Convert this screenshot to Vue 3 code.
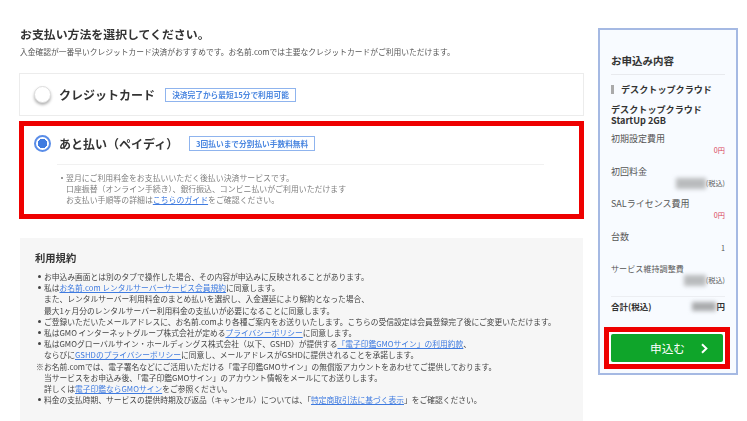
<script setup>
const sideRows = [
  { label: '初期設定費用', value: '0円', kind: 'red' },
  { label: '初回料金', blur: 30, value: '(税込)' },
  { label: 'SALライセンス費用', value: '0円', kind: 'red' },
  { label: '台数', value: '1' },
  { label: 'サービス維持調整費', blur: 22, value: '(税込)', small: true }
]
</script>

<template>
  <div class="page">
    <main class="main">
      <h1 class="title">お支払い方法を選択してください。</h1>
      <p class="lead">入金確認が一番早いクレジットカード決済がおすすめです。お名前.comでは主要なクレジットカードがご利用いただけます。</p>

      <section class="card plain">
        <span class="radio"></span>
        <span class="method">クレジットカード</span>
        <span class="tag">決済完了から最短15分で利用可能</span>
      </section>

      <section class="card marked">
        <div class="head">
          <span class="radio on"></span>
          <span class="method">あと払い（ペイディ）</span>
          <span class="tag wide">3回払いまで分割払い手数料無料</span>
        </div>
        <div class="detail">
          <p class="dot">翌月にご利用料金をお支払いいただく後払い決済サービスです。</p>
          <p>口座振替（オンライン手続き）、銀行振込、コンビニ払いがご利用いただけます</p>
          <p>お支払い手順等の詳細は<a>こちらのガイド</a>をご確認ください。</p>
        </div>
      </section>

      <section class="terms">
        <h2>利用規約</h2>
        <ul>
          <li>お申込み画面とは別のタブで操作した場合、その内容が申込みに反映されることがあります。</li>
          <li>私は<a>お名前.com レンタルサーバーサービス会員規約</a>に同意します。<br>また、レンタルサーバー利用料金のまとめ払いを選択し、入金遅延により解約となった場合、<br>最大1ヶ月分のレンタルサーバー利用料金の支払いが必要になることに同意します。</li>
          <li>ご登録いただいたメールアドレスに、お名前.comより各種ご案内をお送りいたします。こちらの受信設定は会員登録完了後にご変更いただけます。</li>
          <li>私はGMO インターネットグループ株式会社が定める<a>プライバシーポリシー</a>に同意します。</li>
          <li>私はGMOグローバルサイン・ホールディングス株式会社（以下、GSHD）が提供する<a>「電子印鑑GMOサイン」の利用約款</a>、<br>ならびに<a>GSHDのプライバシーポリシー</a>に同意し、メールアドレスがGSHDに提供されることを承諾します。</li>
          <li class="note">お名前.comでは、電子署名などにご活用いただける「電子印鑑GMOサイン」の無償版アカウントをあわせてご提供しております。<br>当サービスをお申込み後、「電子印鑑GMOサイン」のアカウント情報をメールにてお送りします。<br>詳しくは<a>電子印鑑ならGMOサイン</a>をご参照ください。</li>
          <li>料金の支払時期、サービスの提供時期及び返品（キャンセル）については、「<a>特定商取引法に基づく表示</a>」をご確認ください。</li>
        </ul>
      </section>
    </main>

    <aside class="side">
      <h3>お申込み内容</h3>
      <div class="category">デスクトップクラウド</div>
      <div class="plan">デスクトップクラウド<br>StartUp 2GB</div>
      <div v-for="row in sideRows" :key="row.label" class="row">
        <div class="label" :class="{ small: row.small }">{{ row.label }}</div>
        <div class="value" :class="row.kind">
          <span v-if="row.blur" class="smudge" :style="{ width: row.blur + 'px' }"></span>{{ row.value }}
        </div>
      </div>
      <div class="total">
        <span>合計(税込)</span>
        <span class="sum"><span class="smudge dark"></span>円</span>
      </div>
      <div class="cta">
        <button type="button">
          <span>申込む</span>
          <svg width="9" height="11" viewBox="0 0 9 11"><path d="M2 1.2 6.4 5.5 2 9.8" fill="none" stroke="#fff" stroke-width="2"/></svg>
        </button>
      </div>
    </aside>
  </div>
</template>

<style>
html, body { margin: 0; background: #fff; }
</style>

<style scoped>
.page {
  width: 747px;
  height: 421px;
  overflow: hidden;
  box-sizing: border-box;
  padding: 28px 10px 0 19px;
  display: flex;
  align-items: flex-start;
  gap: 14px;
  font-family: "Noto Sans CJK JP", "Noto Sans", sans-serif;
  color: #333;
  filter: blur(0.45px);
}
.main { width: 565px; flex: none; }
.title { margin: 0 0 0 1px; font-size: 11.9px; line-height: 12px; font-weight: 700; color: #333; }
.lead { margin: 6px 0 0 1px; font-size: 7.75px; line-height: 11px; color: #555; white-space: nowrap; }
.card { box-sizing: border-box; background: #fff; }
.plain {
  margin-top: 16px;
  height: 43px;
  border: 1px solid #ececec;
  display: flex;
  align-items: center;
  padding-left: 14px;
}
.marked {
  margin-top: 5px;
  height: 98px;
  border: 5px solid #ee0000;
  padding: 9px 0 0 10px;
}
.head { display: flex; align-items: center; }
.radio {
  width: 17px;
  height: 17px;
  box-sizing: border-box;
  border: 1px solid #ddd;
  border-radius: 50%;
  background: #fff;
  box-shadow: 0 2px 3px rgba(0, 0, 0, 0.3);
  flex: none;
  margin-right: 8px;
}
.radio.on {
  border: 2px solid #5a8de8;
  background: radial-gradient(circle, #3f7be0 0 4.5px, #fff 5px);
  box-shadow: none;
}
.method { font-size: 12px; line-height: 15px; font-weight: 700; color: #333; white-space: nowrap; }
.tag {
  margin-left: 10px;
  box-sizing: border-box;
  height: 14px;
  width: 131px;
  border: 1px solid #8fb4ee;
  color: #4a86e0;
  font-size: 7.7px;
  line-height: 12px;
  font-weight: 700;
  text-align: center;
  white-space: nowrap;
}
.tag.wide { width: 126px; height: 15px; line-height: 13px; margin-left: 11px; }
.detail {
  margin: 12px 35px 0 23px;
  border-top: 1px solid #f1f1f1;
  padding: 7px 0 0 9px;
  font-size: 7.9px;
  line-height: 11px;
  color: #808080;
}
.detail p { margin: 0; white-space: nowrap; }
.dot { position: relative; }
.dot::before {
  content: "";
  position: absolute;
  left: -5px;
  top: 5px;
  width: 2px;
  height: 2px;
  border-radius: 50%;
  background: #777;
}
a { color: #3f7be0; text-decoration: underline; }
.terms {
  margin: 19px 1px 0 1px;
  height: 183px;
  box-sizing: border-box;
  background: #f6f6f6;
  padding: 13px 0 0 15px;
}
.terms h2 { margin: 0; font-size: 10.3px; line-height: 14px; font-weight: 700; color: #333; }
.terms ul { list-style: none; margin: 6px 0 0; padding: 0 0 0 9px; font-size: 7.75px; line-height: 11.2px; color: #444; white-space: nowrap; }
.terms li { position: relative; }
.terms li::before {
  content: "";
  position: absolute;
  left: -6px;
  top: 4px;
  width: 3px;
  height: 3px;
  border-radius: 50%;
  background: #444;
}
.terms li.note::before { content: "※"; background: none; left: -8px; top: 0; width: auto; height: auto; }
.side {
  width: 140px;
  flex: none;
  height: 347px;
  box-sizing: border-box;
  border: 2px solid #a5b9e3;
  background: #f8fbff;
  padding: 24px 11px 0 11px;
  position: relative;
}
.side h3 { margin: 0; padding-bottom: 7px; font-size: 10.5px; line-height: 13px; font-weight: 700; border-bottom: 1px solid #e8eaee; color: #333; }
.category {
  margin-top: 8px;
  padding-left: 10px;
  font-size: 9.1px;
  line-height: 12px;
  font-weight: 700;
  position: relative;
  white-space: nowrap;
}
.category::before { content: ""; position: absolute; left: 0; top: 2px; width: 3px; height: 9px; background: #aaa; }
.plan { margin: 9px 0 -2.5px; font-size: 9.1px; line-height: 11px; font-weight: 700; white-space: nowrap; }
.row { margin-top: 8.5px; }
.label { font-size: 9px; line-height: 13px; color: #555; white-space: nowrap; }
.label.small { font-size: 8.1px; }
.value { height: 11px; font-size: 7.2px; line-height: 11px; color: #555; text-align: right; display: flex; justify-content: flex-end; align-items: center; }
.value.red { color: #d9455a; }
.smudge { display: inline-block; height: 11px; background: #b9bbbd; filter: blur(2px); }
.smudge.dark { width: 24px; height: 9px; background: #a9abad; }
.total {
  margin: 10px 0 0;
  border-top: 1px solid #eceef2;
  padding-top: 2px;
  display: flex;
  justify-content: space-between;
  align-items: center;
  font-size: 8.5px;
  line-height: 14px;
  font-weight: 700;
}
.sum { display: flex; align-items: center; }
.cta {
  position: absolute;
  left: 4px;
  top: 297px;
  width: 126px;
  height: 42px;
  box-sizing: border-box;
  border: 5px solid #ee0000;
  padding: 2px;
  background: #fff;
}
.cta button {
  width: 112px;
  height: 28px;
  border: 0;
  border-radius: 2px;
  background: #0fa52a;
  color: #fff;
  font: 400 11.7px/28px "Noto Sans CJK JP", sans-serif;
  padding: 0 0 0 25px;
  display: flex;
  align-items: center;
  gap: 15px;
  justify-content: center;
}
</style>
